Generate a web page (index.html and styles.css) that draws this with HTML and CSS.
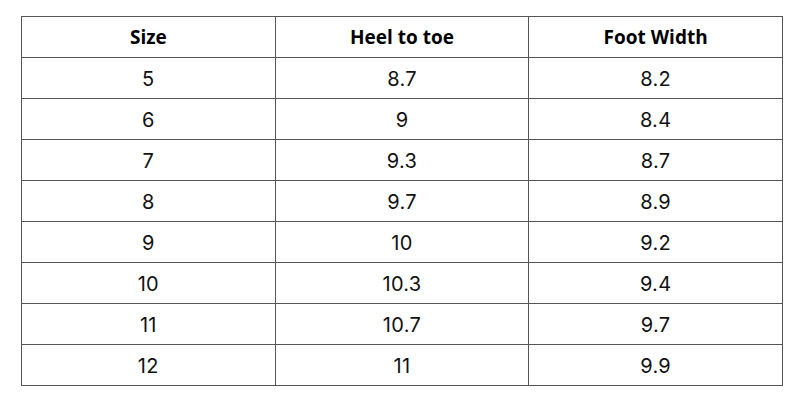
FILE: index.html
```html
<!DOCTYPE html>
<html>
<head>
<meta charset="utf-8">
<link rel="stylesheet" href="styles.css">
</head>
<body>
<table class="size-table">
  <thead>
    <tr><th>Size</th><th>Heel to toe</th><th>Foot Width</th></tr>
  </thead>
  <tbody>
    <tr><td>5</td><td>8.7</td><td>8.2</td></tr>
    <tr><td>6</td><td>9</td><td>8.4</td></tr>
    <tr><td>7</td><td>9.3</td><td>8.7</td></tr>
    <tr><td>8</td><td>9.7</td><td>8.9</td></tr>
    <tr><td>9</td><td>10</td><td>9.2</td></tr>
    <tr><td>10</td><td>10.3</td><td>9.4</td></tr>
    <tr><td>11</td><td>10.7</td><td>9.7</td></tr>
    <tr><td>12</td><td>11</td><td>9.9</td></tr>
  </tbody>
</table>
</body>
</html>
```
FILE: styles.css
```css
html, body {
  margin: 0;
  background: #ffffff;
}
body {
  padding: 16px 0 0 21px;
  font-family: "Open Sans", "Liberation Sans", sans-serif;
  color: #111;
}
.size-table {
  border-collapse: collapse;
  width: 762px;
  table-layout: fixed;
}
.size-table th,
.size-table td {
  border: 1px solid #555;
  height: 40px;
  padding: 0;
  text-align: center;
  vertical-align: middle;
  line-height: 20px;
}
.size-table th {
  font-family: "Open Sans", "Liberation Sans", sans-serif;
  font-weight: 700;
  font-size: 19px;
  color: #000;
}
.size-table td {
  font-family: Inter, "Liberation Sans", sans-serif;
  font-weight: 400;
  font-size: 20px;
  letter-spacing: 0.3px;
  padding-top: 2px;
  height: 38px;
}
```
